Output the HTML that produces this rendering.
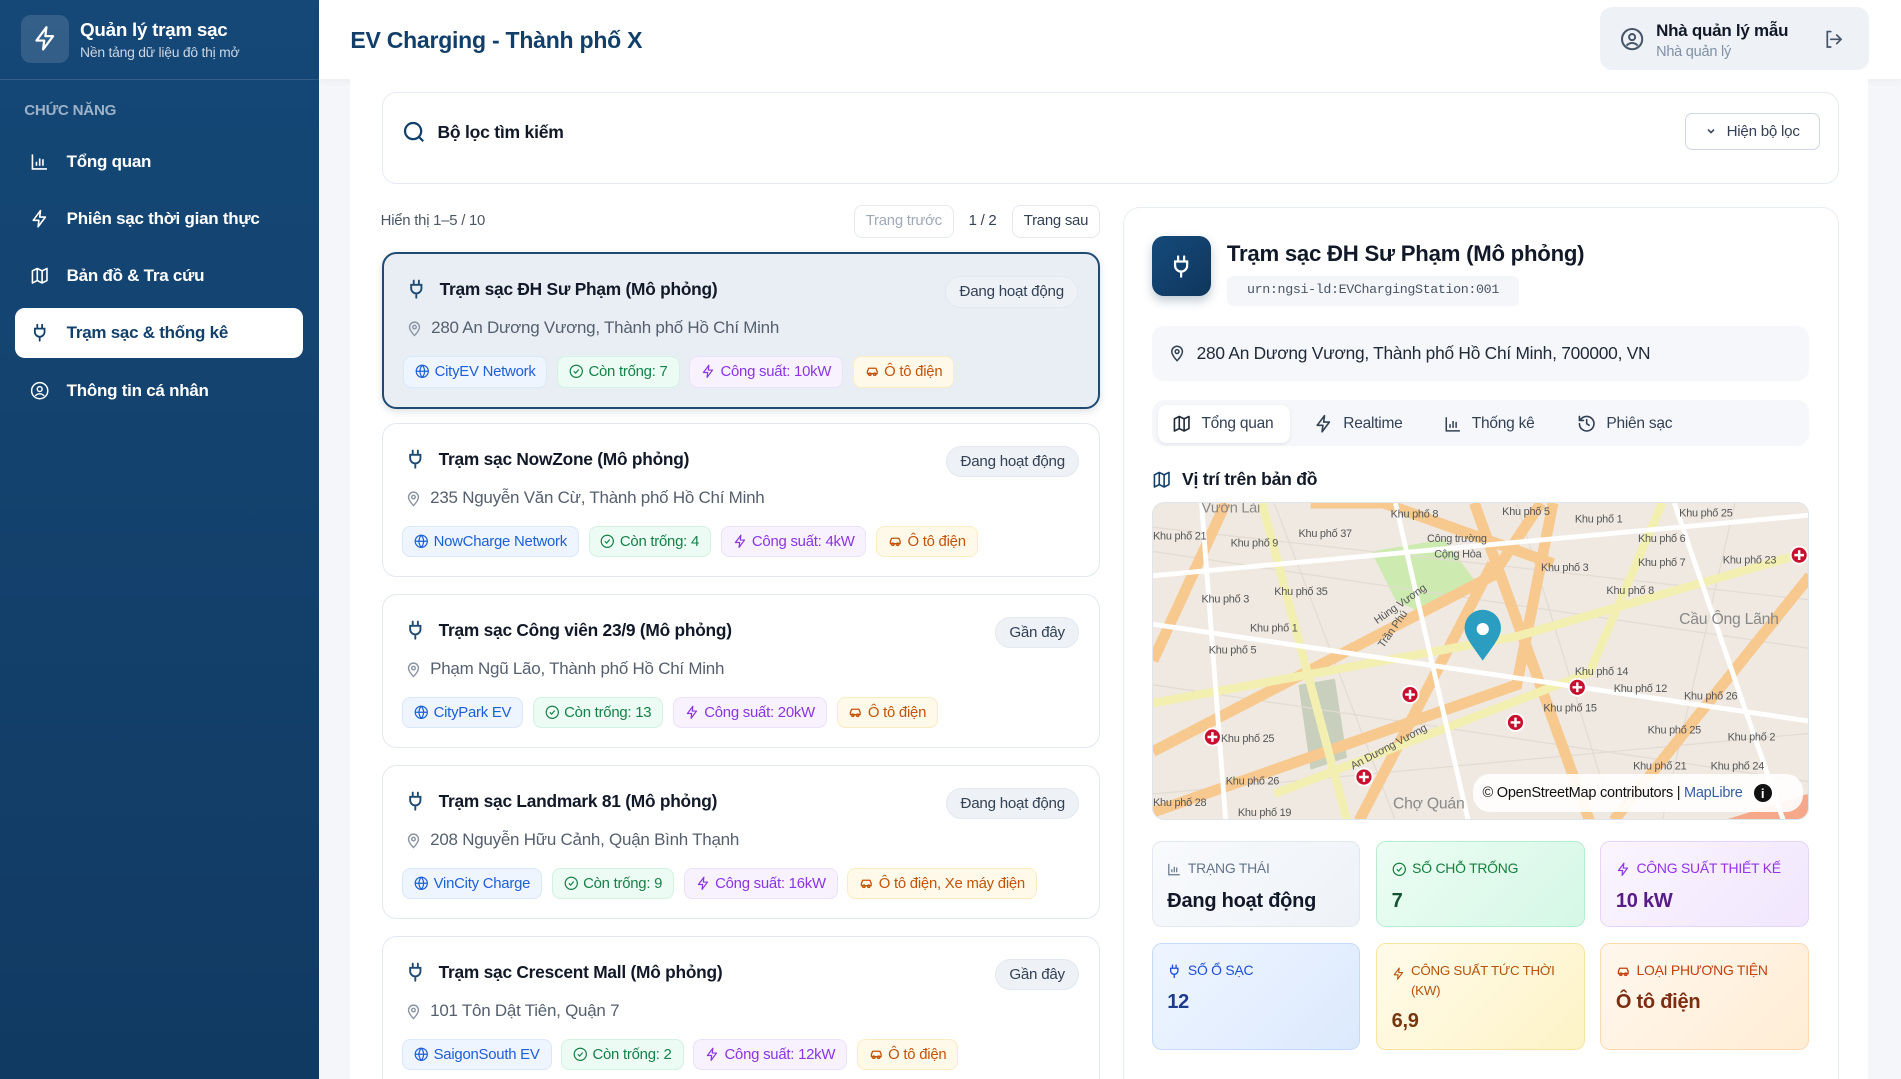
<!DOCTYPE html>
<html><head><meta charset="utf-8">
<style>
*{box-sizing:border-box;margin:0;padding:0}
html,body{width:1901px;height:1079px;overflow:hidden;background:#f4f6f9}
#root{zoom:1.21237;width:1568px;height:890px;position:relative;font-family:"Liberation Sans","Noto Sans CJK SC",sans-serif;color:#1e293b;letter-spacing:-0.2px}
.abs{position:absolute}
svg{display:block;flex:none}
.side{left:0;top:0;width:263px;height:890px;background:linear-gradient(180deg,#154877,#113a62)}
.nav{position:absolute;left:12px;width:238px;height:41px;display:flex;align-items:center;padding-left:13px;color:#fff;font-size:14px;font-weight:bold}
.nav svg{margin-right:14px}
.nav.act{background:#fff;color:#12406b;border-radius:8px}
.top{left:263px;top:0;width:1305px;height:65px;background:#fff;box-shadow:0 2px 6px rgba(0,0,0,.04)}
.card{position:absolute;left:315px;width:592px;height:127px;background:#fff;border:1px solid #e3e8ef;border-radius:12px}
.card.sel{background:#e9eef4;border:2px solid #1f4a72;box-shadow:0 2px 6px rgba(15,40,70,.15)}
.ct{position:absolute;left:18px;top:19px;display:flex;align-items:center;font-weight:bold;font-size:14.3px;color:#111827}
.ct svg{margin-right:11px}
.badge{position:absolute;right:16px;top:18px;height:26px;padding:0 11px;background:#eef2f6;border:1px solid #e2e8f0;border-radius:13px;font-size:12.5px;color:#334155;display:flex;align-items:center}
.addr{position:absolute;left:18px;top:53px;display:flex;align-items:center;font-size:14px;color:#555f6d}
.addr svg{margin-right:7px}
.chips{position:absolute;left:16px;top:84px;display:flex;gap:8px}
.chip{height:26px;padding:0 9px;border-radius:7px;font-size:12.3px;display:flex;align-items:center;gap:4px;border:1px solid}
.c1{background:#eef5ff;border-color:#dbe7fb;color:#1d5fd6}
.c2{background:#ecfbf3;border-color:#d3f2e1;color:#17804a}
.c3{background:#f8f2ff;border-color:#ece1fb;color:#8a35e0}
.c4{background:#fff9ea;border-color:#fbecc3;color:#c2540a}
.stat{position:absolute;width:172px;border-radius:8px;border:1px solid;padding:14px 12px}
.sl{font-size:11.5px;display:flex;align-items:flex-start;gap:5px;text-transform:uppercase;line-height:16px}
.sl svg{margin-top:2px}
.sv{font-size:16.5px;font-weight:bold;margin-top:9px}
.tab{position:absolute;top:4px;height:31px;display:flex;align-items:center;font-size:12.8px;color:#334155;gap:8px}
</style></head><body><div id="root">

<svg width="0" height="0" style="position:absolute">
<defs>
<symbol id="globe" viewBox="0 0 24 24"><g fill="none" stroke="currentColor" stroke-width="2"><circle cx="12" cy="12" r="10"/><path d="M2 12h20M12 2a15 15 0 0 1 0 20M12 2a15 15 0 0 0 0 20"/></g></symbol>
<symbol id="check" viewBox="0 0 24 24"><g fill="none" stroke="currentColor" stroke-width="2"><circle cx="12" cy="12" r="10"/><path d="m8 12 3 3 5-6"/></g></symbol>
<symbol id="bolt" viewBox="0 0 24 24"><path d="M13 2 4 14h7l-1 8 9-12h-7z" fill="none" stroke="currentColor" stroke-width="2" stroke-linejoin="round"/></symbol>
<symbol id="car" viewBox="0 0 24 24"><g fill="none" stroke="currentColor" stroke-width="2.2" stroke-linejoin="round"><path d="M4 16V12l2-5h12l2 5v4H4z"/><circle cx="8" cy="17" r="2"/><circle cx="16" cy="17" r="2"/></g></symbol>
<symbol id="plug" viewBox="0 0 24 24"><path d="M9 2v5M15 2v5M6 7h12v4a6 6 0 0 1-12 0zM12 17v5" fill="none" stroke="currentColor" stroke-width="2.2" stroke-linecap="round"/></symbol>
<symbol id="pin" viewBox="0 0 24 24"><g fill="none" stroke="currentColor" stroke-width="2"><path d="M12 22s7-7 7-12a7 7 0 0 0-14 0c0 5 7 12 7 12z"/><circle cx="12" cy="10" r="2.5"/></g></symbol>
<symbol id="chart" viewBox="0 0 24 24"><path d="M3 3v18h18M8 17v-5M12 17V8M16 17v-8" fill="none" stroke="currentColor" stroke-width="2"/></symbol>
<symbol id="map" viewBox="0 0 24 24"><path d="M3 6l6-3 6 3 6-3v15l-6 3-6-3-6 3zM9 3v15M15 6v15" fill="none" stroke="currentColor" stroke-width="2" stroke-linejoin="round"/></symbol>
</defs></svg>

<div class="abs side">
  <div class="abs" style="left:17px;top:12px;width:40px;height:40px;border-radius:8px;background:rgba(255,255,255,.13);display:flex;align-items:center;justify-content:center">
    <svg width="22" height="22" style="color:#fff"><use href="#bolt"/></svg>
  </div>
  <div class="abs" style="left:66px;top:16px;color:#fff;font-weight:bold;font-size:15.5px">Quản lý trạm sạc</div>
  <div class="abs" style="left:66px;top:36px;color:#c9d6e4;font-size:11.5px">Nền tảng dữ liệu đô thị mở</div>
  <div class="abs" style="left:0;top:65px;width:263px;height:1px;background:rgba(255,255,255,.12)"></div>
  <div class="abs" style="left:20px;top:84px;color:#9db2c8;font-size:12.5px;font-weight:bold">CHỨC NĂNG</div>
  <div class="nav" style="top:113px"><svg width="16" height="16" style="color:#fff"><use href="#chart"/></svg>Tổng quan</div>
  <div class="nav" style="top:160px"><svg width="16" height="16" style="color:#fff"><use href="#bolt"/></svg>Phiên sạc thời gian thực</div>
  <div class="nav" style="top:207px"><svg width="16" height="16" style="color:#fff"><use href="#map"/></svg>Bản đồ &amp; Tra cứu</div>
  <div class="nav act" style="top:254px"><svg width="16" height="16" style="color:#12406b"><use href="#plug"/></svg>Trạm sạc &amp; thống kê</div>
  <div class="nav" style="top:302px"><svg width="16" height="16" viewBox="0 0 24 24" fill="none" stroke="#fff" stroke-width="1.8"><circle cx="12" cy="12" r="10"/><circle cx="12" cy="10" r="3"/><path d="M6.5 18.5a7 7 0 0 1 11 0"/></svg>Thông tin cá nhân</div>
</div>

<div class="abs top">
  <div class="abs" style="left:26px;top:22px;font-size:19px;font-weight:bold;color:#123f6a">EV Charging - Thành phố X</div>
  <div class="abs" style="left:1057px;top:6px;width:222px;height:52px;background:#eef2f7;border-radius:10px">
    <svg class="abs" style="left:16px;top:16px" width="20" height="20" viewBox="0 0 24 24" fill="none" stroke="#475569" stroke-width="2"><circle cx="12" cy="12" r="10"/><circle cx="12" cy="10" r="3"/><path d="M6.5 18.5a7 7 0 0 1 11 0"/></svg>
    <div class="abs" style="left:46px;top:11px;font-size:14px;font-weight:bold;color:#111827">Nhà quản lý mẫu</div>
    <div class="abs" style="left:46px;top:30px;font-size:12px;color:#8090a4">Nhà quản lý</div>
    <svg class="abs" style="left:184px;top:18px" width="17" height="17" viewBox="0 0 24 24" fill="none" stroke="#475569" stroke-width="2" stroke-linecap="round"><path d="M9 21H5V3h4M16 17l5-5-5-5M21 12H9"/></svg>
  </div>
</div>

<div class="abs" style="left:289px;top:65px;width:1252px;height:825px;background:#fff"></div>

<div class="abs" style="left:315px;top:76px;width:1202px;height:76px;background:#fff;border:1px solid #e6ebf1;border-radius:12px">
  <svg class="abs" style="left:16px;top:22px" width="20" height="20" viewBox="0 0 24 24" fill="none" stroke="#12406b" stroke-width="2.2"><circle cx="11" cy="11" r="8"/><path d="m21 21-4.3-4.3"/></svg>
  <div class="abs" style="left:45px;top:24px;font-size:14.5px;font-weight:bold;color:#111827">Bộ lọc tìm kiếm</div>
  <div class="abs" style="left:1074px;top:16px;width:111px;height:31px;border:1px solid #cfd8e3;border-radius:6px;display:flex;align-items:center;justify-content:center;gap:8px;font-size:12.5px;color:#334155"><svg width="10" height="10" viewBox="0 0 24 24" fill="none" stroke="#334155" stroke-width="3"><path d="m6 9 6 6 6-6"/></svg>Hiện bộ lọc</div>
</div>

<div class="abs" style="left:314px;top:176px;font-size:12.3px;color:#4b5563">Hiển thị 1–5 / 10</div>
<div class="abs" style="left:704px;top:169px;width:83px;height:27px;border:1px solid #e5e9ef;border-radius:7px;font-size:12.3px;color:#a0a9b6;display:flex;align-items:center;justify-content:center">Trang trước</div>
<div class="abs" style="left:799px;top:176px;font-size:12.3px;color:#334155">1 / 2</div>
<div class="abs" style="left:835px;top:169px;width:72px;height:27px;border:1px solid #e5e9ef;border-radius:7px;font-size:12.3px;color:#334155;display:flex;align-items:center;justify-content:center">Trang sau</div>

<!-- cards -->
<div class="card sel" style="top:208px;height:129px">
  <div class="ct"><svg width="17" height="20" style="color:#1f4a72"><use href="#plug"/></svg>Trạm sạc ĐH Sư Phạm (Mô phỏng)</div>
  <div class="badge">Đang hoạt động</div>
  <div class="addr"><svg width="14" height="14" style="color:#8a94a3"><use href="#pin"/></svg>280 An Dương Vương, Thành phố Hồ Chí Minh</div>
  <div class="chips"><div class="chip c1"><svg width="12" height="12"><use href="#globe"/></svg>CityEV Network</div><div class="chip c2"><svg width="12" height="12"><use href="#check"/></svg>Còn trống: 7</div><div class="chip c3"><svg width="12" height="12"><use href="#bolt"/></svg>Công suất: 10kW</div><div class="chip c4"><svg width="12" height="12"><use href="#car"/></svg>Ô tô điện</div></div>
</div>
<div class="card" style="top:349px">
  <div class="ct"><svg width="17" height="20" style="color:#1f4a72"><use href="#plug"/></svg>Trạm sạc NowZone (Mô phỏng)</div>
  <div class="badge">Đang hoạt động</div>
  <div class="addr"><svg width="14" height="14" style="color:#8a94a3"><use href="#pin"/></svg>235 Nguyễn Văn Cừ, Thành phố Hồ Chí Minh</div>
  <div class="chips"><div class="chip c1"><svg width="12" height="12"><use href="#globe"/></svg>NowCharge Network</div><div class="chip c2"><svg width="12" height="12"><use href="#check"/></svg>Còn trống: 4</div><div class="chip c3"><svg width="12" height="12"><use href="#bolt"/></svg>Công suất: 4kW</div><div class="chip c4"><svg width="12" height="12"><use href="#car"/></svg>Ô tô điện</div></div>
</div>
<div class="card" style="top:490px">
  <div class="ct"><svg width="17" height="20" style="color:#1f4a72"><use href="#plug"/></svg>Trạm sạc Công viên 23/9 (Mô phỏng)</div>
  <div class="badge">Gần đây</div>
  <div class="addr"><svg width="14" height="14" style="color:#8a94a3"><use href="#pin"/></svg>Phạm Ngũ Lão, Thành phố Hồ Chí Minh</div>
  <div class="chips"><div class="chip c1"><svg width="12" height="12"><use href="#globe"/></svg>CityPark EV</div><div class="chip c2"><svg width="12" height="12"><use href="#check"/></svg>Còn trống: 13</div><div class="chip c3"><svg width="12" height="12"><use href="#bolt"/></svg>Công suất: 20kW</div><div class="chip c4"><svg width="12" height="12"><use href="#car"/></svg>Ô tô điện</div></div>
</div>
<div class="card" style="top:631px">
  <div class="ct"><svg width="17" height="20" style="color:#1f4a72"><use href="#plug"/></svg>Trạm sạc Landmark 81 (Mô phỏng)</div>
  <div class="badge">Đang hoạt động</div>
  <div class="addr"><svg width="14" height="14" style="color:#8a94a3"><use href="#pin"/></svg>208 Nguyễn Hữu Cảnh, Quận Bình Thạnh</div>
  <div class="chips"><div class="chip c1"><svg width="12" height="12"><use href="#globe"/></svg>VinCity Charge</div><div class="chip c2"><svg width="12" height="12"><use href="#check"/></svg>Còn trống: 9</div><div class="chip c3"><svg width="12" height="12"><use href="#bolt"/></svg>Công suất: 16kW</div><div class="chip c4"><svg width="12" height="12"><use href="#car"/></svg>Ô tô điện, Xe máy điện</div></div>
</div>
<div class="card" style="top:772px;height:140px">
  <div class="ct"><svg width="17" height="20" style="color:#1f4a72"><use href="#plug"/></svg>Trạm sạc Crescent Mall (Mô phỏng)</div>
  <div class="badge">Gần đây</div>
  <div class="addr"><svg width="14" height="14" style="color:#8a94a3"><use href="#pin"/></svg>101 Tôn Dật Tiên, Quận 7</div>
  <div class="chips"><div class="chip c1"><svg width="12" height="12"><use href="#globe"/></svg>SaigonSouth EV</div><div class="chip c2"><svg width="12" height="12"><use href="#check"/></svg>Còn trống: 2</div><div class="chip c3"><svg width="12" height="12"><use href="#bolt"/></svg>Công suất: 12kW</div><div class="chip c4"><svg width="12" height="12"><use href="#car"/></svg>Ô tô điện</div></div>
</div>

<!-- detail -->
<div class="abs" style="left:926px;top:171px;width:591px;height:740px;background:#fff;border:1px solid #e8edf2;border-radius:14px"></div>
<div class="abs" style="left:950px;top:195px;width:49px;height:49px;border-radius:10px;background:linear-gradient(135deg,#154a7b,#0f365c);box-shadow:0 4px 8px rgba(15,54,92,.25);display:flex;align-items:center;justify-content:center">
  <svg width="20" height="24" style="color:#fff"><use href="#plug"/></svg>
</div>
<div class="abs" style="left:1012px;top:199px;font-size:18.3px;font-weight:bold;color:#111827">Trạm sạc ĐH Sư Phạm (Mô phỏng)</div>
<div class="abs" style="left:1012px;top:228px;width:241px;height:24px;background:#f4f6f9;border-radius:5px;font-family:'Liberation Mono',monospace;font-size:11px;letter-spacing:-0.3px;color:#4b5563;display:flex;align-items:center;justify-content:center">urn:ngsi-ld:EVChargingStation:001</div>
<div class="abs" style="left:950px;top:269px;width:542px;height:45px;background:#f5f7fa;border-radius:10px;display:flex;align-items:center;padding-left:13px;font-size:14.3px;color:#1f2937;gap:9px">
  <svg width="15" height="15" style="color:#334155"><use href="#pin"/></svg>280 An Dương Vương, Thành phố Hồ Chí Minh, 700000, VN</div>
<div class="abs" style="left:950px;top:330px;width:542px;height:38px;background:#f5f7fa;border-radius:10px">
  <div class="abs" style="left:5px;top:4px;width:109px;height:31px;background:#fff;border-radius:7px;box-shadow:0 1px 3px rgba(0,0,0,.08)"></div>
  <div class="tab" style="left:17px"><svg width="16" height="16" style="color:#1f2937"><use href="#map"/></svg>Tổng quan</div>
  <div class="tab" style="left:134px"><svg width="16" height="16" style="color:#334155"><use href="#bolt"/></svg>Realtime</div>
  <div class="tab" style="left:241px"><svg width="15" height="15" style="color:#334155"><use href="#chart"/></svg>Thống kê</div>
  <div class="tab" style="left:351px"><svg width="16" height="16" viewBox="0 0 24 24" fill="none" stroke="#334155" stroke-width="2" stroke-linecap="round"><path d="M3 12a9 9 0 1 0 3-6.7L3 8M3 3v5h5M12 7v5l3 2"/></svg>Phiên sạc</div>
</div>
<div class="abs" style="left:950px;top:387px;display:flex;align-items:center;gap:9px;font-size:14.5px;font-weight:bold;color:#111827"><svg width="16" height="16" style="color:#12406b"><use href="#map"/></svg>Vị trí trên bản đồ</div>

<!-- map -->
<div class="abs" style="left:950px;top:414px;width:542px;height:262px;border-radius:10px;overflow:hidden;border:1px solid #dfe5ec;background:#efe9e1">
<svg width="542" height="262" viewBox="0 0 542 262" font-family="Liberation Sans,sans-serif" font-size="9" fill="#555">
  <polygon points="180,40 240,30 270,70 220,90 200,80" fill="#cdebb0"/>
  <polygon points="120,150 150,145 160,210 130,220" fill="#c8d0bd"/>
  <polygon points="540,240 470,262 542,262" fill="#f5a88a"/>
  <g stroke="#e2dbd2" stroke-width="1" fill="none">
    <path d="M0,20 L542,80M0,40 L542,120M0,150 L542,230M100,0 L200,262M300,0 L380,262M480,0 L420,262M0,240 L542,190"/>
  </g>
  <g stroke="#f7c98f" stroke-width="9" fill="none">
    <path d="M0,255 L300,150 L330,0"/>
    <path d="M0,205 L280,60 L320,0"/>
    <path d="M170,262 L280,50"/>
    <path d="M265,0 L360,262"/>
    <path d="M380,262 L542,60"/>
    <path d="M0,130 L60,0"/>
    <path d="M130,0 L190,0 L330,50"/>
  </g>
  <g stroke="#f2efb0" stroke-width="7" fill="none">
    <path d="M0,165 L300,110 L542,40"/>
    <path d="M90,0 L160,262"/>
    <path d="M100,240 L360,140 L420,0"/>
  </g>
  <g stroke="#fff" stroke-width="4" fill="none">
    <path d="M0,60 L542,10"/><path d="M0,100 L542,180"/><path d="M200,0 L260,262"/><path d="M430,0 L520,262"/><path d="M40,0 L60,262"/>
  </g>
  <text x="40" y="8" font-size="12" fill="#888">Vườn Lài</text>
  <text x="0" y="30">Khu phố 21</text><text x="64" y="36">Khu phố 9</text><text x="120" y="28">Khu phố 37</text>
  <text x="196" y="12">Khu phố 8</text><text x="288" y="10">Khu phố 5</text><text x="348" y="16">Khu phố 1</text>
  <text x="434" y="11">Khu phố 25</text><text x="400" y="32">Khu phố 6</text><text x="400" y="52">Khu phố 7</text><text x="470" y="50">Khu phố 23</text>
  <text x="226" y="32">Công trường</text><text x="232" y="45">Cộng Hòa</text>
  <text x="320" y="56">Khu phố 3</text><text x="374" y="75">Khu phố 8</text>
  <text x="40" y="82">Khu phố 3</text><text x="100" y="76">Khu phố 35</text><text x="80" y="106">Khu phố 1</text><text x="46" y="124">Khu phố 5</text>
  <text x="434" y="100" font-size="13" fill="#888">Cầu Ông Lãnh</text>
  <text x="380" y="156">Khu phố 12</text><text x="438" y="162">Khu phố 26</text><text x="348" y="142">Khu phố 14</text>
  <text x="322" y="172">Khu phố 15</text><text x="408" y="190">Khu phố 25</text><text x="474" y="196">Khu phố 2</text>
  <text x="396" y="220">Khu phố 21</text><text x="460" y="220">Khu phố 24</text><text x="370" y="244">Khu phố 20</text>
  <text x="56" y="197">Khu phố 25</text><text x="60" y="232">Khu phố 26</text><text x="0" y="250">Khu phố 28</text><text x="70" y="258">Khu phố 19</text>
  <text x="198" y="252" font-size="13" fill="#888">Chợ Quán</text>
  <text x="165" y="220" transform="rotate(-28 165 220)">An Dương Vương</text>
  <text x="185" y="100" transform="rotate(-35 185 100)">Hùng Vương</text>
  <text x="190" y="120" transform="rotate(-55 190 120)">Trần Phú</text>
  <g fill="#c8102e" stroke="#fff" stroke-width="1.5"><circle cx="212" cy="158" r="7"/><circle cx="299" cy="181" r="7"/><circle cx="350" cy="152" r="7"/><circle cx="49" cy="193" r="7"/><circle cx="174" cy="226" r="7"/><circle cx="533" cy="43" r="7"/></g>
  <g stroke="#fff" stroke-width="2"><path d="M208,158h8M212,154v8M295,181h8M299,177v8M346,152h8M350,148v8M45,193h8M49,189v8M170,226h8M174,222v8M529,43h8M533,39v8"/></g>
  <path d="M272,130 C262,116 257,110 257,103 a15,15 0 0 1 30,0 c0,7 -5,13 -15,27z" fill="#2a9dc0"/>
  <circle cx="272" cy="104" r="5" fill="#fff"/>
</svg>
<div class="abs" style="left:264px;top:224px;width:272px;height:31px;background:rgba(255,255,255,.9);border-radius:14px;font-size:12px;color:#111;display:flex;align-items:center;padding-left:8px">© OpenStreetMap contributors | <span style="color:#3a5da0;margin-left:3px">MapLibre</span><span style="margin-left:9px;width:15px;height:15px;border-radius:50%;background:#111;color:#fff;font-size:11px;font-weight:bold;display:inline-flex;align-items:center;justify-content:center">i</span></div>
</div>

<!-- stats -->
<div class="stat" style="left:950px;top:694px;height:71px;background:linear-gradient(135deg,#f8fafc,#eef2f7);border-color:#e2e8f0">
  <div class="sl" style="color:#64748b"><svg width="12" height="12"><use href="#chart"/></svg>Trạng thái</div><div class="sv" style="color:#111827">Đang hoạt động</div></div>
<div class="stat" style="left:1135px;top:694px;height:71px;background:linear-gradient(135deg,#ecfdf4,#d5f7e6);border-color:#b6edd0">
  <div class="sl" style="color:#15803d"><svg width="12" height="12"><use href="#check"/></svg>Số chỗ trống</div><div class="sv" style="color:#14532d">7</div></div>
<div class="stat" style="left:1320px;top:694px;height:71px;background:linear-gradient(135deg,#faf5ff,#f1e6fd);border-color:#e6d4fb">
  <div class="sl" style="color:#9333ea"><svg width="12" height="12"><use href="#bolt"/></svg>Công suất thiết kế</div><div class="sv" style="color:#581c87">10 kW</div></div>
<div class="stat" style="left:950px;top:778px;height:88px;background:linear-gradient(135deg,#eef5ff,#dce9fd);border-color:#c4dafc">
  <div class="sl" style="color:#1d4ed8"><svg width="12" height="12"><use href="#plug"/></svg>Số ổ sạc</div><div class="sv" style="color:#1e3a8a">12</div></div>
<div class="stat" style="left:1135px;top:778px;height:88px;background:linear-gradient(135deg,#fffbea,#fef3c7);border-color:#fbe3a0">
  <div class="sl" style="color:#b45309;font-size:11px"><svg width="11" height="11" style="margin-top:5px"><use href="#bolt"/></svg><span>Công suất tức thời (kW)</span></div><div class="sv" style="color:#78350f;margin-top:8px">6,9</div></div>
<div class="stat" style="left:1320px;top:778px;height:88px;background:linear-gradient(135deg,#fff7ed,#ffedd5);border-color:#fcd9b0">
  <div class="sl" style="color:#c2410c"><svg width="12" height="12"><use href="#car"/></svg>Loại phương tiện</div><div class="sv" style="color:#7c2d12">Ô tô điện</div></div>

</div></body></html>
